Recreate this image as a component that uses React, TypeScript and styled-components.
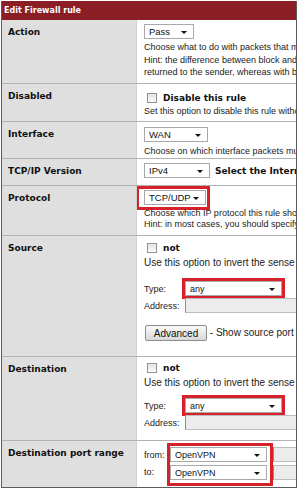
import styled, { createGlobalStyle } from 'styled-components';

const sans = `'Liberation Sans', Arial, sans-serif`;
const heavy = `'DejaVu Sans', Verdana, sans-serif`;

const GlobalStyle = createGlobalStyle`
  html, body {
    margin: 0;
    padding: 0;
    background: #fff;
  }
  * {
    box-sizing: border-box;
  }
`;

const FrameStyled = styled.div`
  margin: 1px 0 0 1px;
  width: 296px;
  border: 1px solid #5c5c5c;
  border-top: none;
  overflow: hidden;
  background: #fff;
`;

const HeaderStyled = styled.div`
  height: 19px;
  margin: 0 -1px;
  padding-left: 3px;
  background: #8b1d24;
  color: #fff;
  font: bold 8px/19px ${heavy};
  white-space: nowrap;
`;

const RowStyled = styled.div<{ $h: number }>`
  display: grid;
  grid-template-columns: 135px 1fr;
  height: ${({ $h }) => $h}px;
  border-bottom: 1px solid #b3b3b3;

  &:last-child {
    border-bottom: none;
  }
`;

const LabelStyled = styled.div`
  padding: 6px 0 0 6px;
  background: #dfdfdf;
  border-right: 1px solid #d2d2d2;
  color: #111;
  font: bold 9px/12px ${heavy};
  white-space: nowrap;
`;

const CellStyled = styled.div<{ $pad: number }>`
  display: flex;
  flex-direction: column;
  align-items: flex-start;
  padding: ${({ $pad }) => $pad}px 0 0 7px;
  overflow: hidden;
  white-space: nowrap;
  color: #222;
  font: 9px ${sans};
`;

const HintStyled = styled.div<{ $gap: number; $lh?: number; $size?: number }>`
  margin-top: ${({ $gap }) => $gap}px;
  font-size: ${({ $size }) => $size ?? 9}px;
  line-height: ${({ $lh }) => $lh ?? 12}px;
  color: #222;
`;

const SelectStyled = styled.div<{ $w: number; $size?: number }>`
  position: relative;
  display: flex;
  align-items: center;
  width: ${({ $w }) => $w}px;
  height: 15px;
  padding-left: 4px;
  flex-shrink: 0;
  border: 1px solid #a9a9a9;
  background: #fff;
  color: #111;
  font: ${({ $size }) => $size ?? 9.5}px ${sans};

  &::after {
    content: '';
    position: absolute;
    right: 6px;
    top: 6px;
    border-left: 3px solid transparent;
    border-right: 3px solid transparent;
    border-top: 3px solid #111;
  }
`;

const InlineStyled = styled.div<{ $gap?: number }>`
  display: flex;
  align-items: center;
  margin-top: ${({ $gap }) => $gap ?? 0}px;
`;

const BoldTextStyled = styled.span<{ $gap?: number }>`
  margin-left: ${({ $gap }) => $gap ?? 6}px;
  color: #111;
  font: bold 9px/12px ${heavy};
`;

const CheckboxStyled = styled.span`
  width: 10px;
  height: 10px;
  margin-left: 3px;
  border: 1px solid #929292;
  background: linear-gradient(#e4e4e4, #fbfbfb);
`;

const Highlight = styled.div<{ $pad: string }>`
  display: flex;
  flex-direction: column;
  gap: 3px;
  padding: ${({ $pad }) => $pad};
  margin: ${({ $pad }) =>
    $pad
      .split(' ')
      .map((v) => (v === '0' ? '0' : `-${v}`))
      .join(' ')};
  outline: 3px solid #d6222b;
`;

const FieldLabelStyled = styled.span<{ $w: number }>`
  width: ${({ $w }) => $w}px;
  flex-shrink: 0;
  font-size: 9px;
  color: #222;
`;

const TextInputStyled = styled.div<{ $w: number }>`
  width: ${({ $w }) => $w}px;
  height: 15px;
  flex-shrink: 0;
  border: 1px solid #bdbdbd;
  border-left-color: #8d8d8d;
  background: #ececec;
`;

const ButtonStyled = styled.div`
  display: flex;
  align-items: center;
  justify-content: center;
  width: 62px;
  height: 16px;
  margin-left: 1px;
  border: 1px solid #8c8c8c;
  border-radius: 2px;
  background: linear-gradient(#fafafa, #d9d9d9);
  color: #111;
  font: 10px ${sans};
`;

const PortGridStyled = styled.div`
  display: flex;
  margin-top: 1px;
`;

const PortLabelsStyled = styled.div`
  display: flex;
  flex-direction: column;
  justify-content: space-around;
  width: 26px;
  height: 33px;
  font-size: 9px;
`;

const PortInputsStyled = styled.div`
  display: flex;
  flex-direction: column;
  gap: 3px;
  margin: 0 0 0 6px;
`;

type FieldProps = { label: string; children: React.ReactNode; h: number };

const Field = ({ label, children, h }: FieldProps) => (
  <RowStyled $h={h}>
    <LabelStyled>{label}</LabelStyled>
    {children}
  </RowStyled>
);

const Endpoint = ({ pad, typeGap, showButton }: { pad: number; typeGap: number; showButton?: boolean }) => (
  <CellStyled $pad={pad}>
    <InlineStyled>
      <CheckboxStyled />
      <BoldTextStyled>not</BoldTextStyled>
    </InlineStyled>
    <HintStyled $gap={3} $size={10}>
      Use this option to invert the sense of the match.
    </HintStyled>
    <InlineStyled $gap={typeGap}>
      <FieldLabelStyled $w={41}>Type:</FieldLabelStyled>
      <Highlight $pad="0">
        <SelectStyled $w={97} $size={9}>any</SelectStyled>
      </Highlight>
    </InlineStyled>
    <InlineStyled $gap={2}>
      <FieldLabelStyled $w={41}>Address:</FieldLabelStyled>
      <TextInputStyled $w={130} />
    </InlineStyled>
    {showButton && (
      <InlineStyled $gap={12}>
        <ButtonStyled>Advanced</ButtonStyled>
        <HintStyled $gap={0} $size={10}>
          &nbsp;- Show source port range
        </HintStyled>
      </InlineStyled>
    )}
  </CellStyled>
);

const App = () => {
  return (
    <>
      <GlobalStyle />
      <FrameStyled>
        <HeaderStyled>Edit Firewall rule</HeaderStyled>

        <Field label="Action" h={64}>
          <CellStyled $pad={4}>
            <SelectStyled $w={50}>Pass</SelectStyled>
            <HintStyled $gap={2} $lh={12.5}>
              Choose what to do with packets that match the criteria specified below.
              <br />
              Hint: the difference between block and reject is that with reject, a packet
              <br />
              returned to the sender, whereas with block the packet is dropped silently.
            </HintStyled>
          </CellStyled>
        </Field>

        <Field label="Disabled" h={38}>
          <CellStyled $pad={8}>
            <InlineStyled>
              <CheckboxStyled />
              <BoldTextStyled>Disable this rule</BoldTextStyled>
            </InlineStyled>
            <HintStyled $gap={1}>Set this option to disable this rule without removing it from the list.</HintStyled>
          </CellStyled>
        </Field>

        <Field label="Interface" h={37}>
          <CellStyled $pad={5}>
            <SelectStyled $w={64}>WAN</SelectStyled>
            <HintStyled $gap={3}>Choose on which interface packets must come in to match this rule.</HintStyled>
          </CellStyled>
        </Field>

        <Field label="TCP/IP Version" h={27}>
          <CellStyled $pad={4}>
            <InlineStyled>
              <SelectStyled $w={66}>IPv4</SelectStyled>
              <BoldTextStyled $gap={5}>Select the Internet Protocol version</BoldTextStyled>
            </InlineStyled>
          </CellStyled>
        </Field>

        <Field label="Protocol" h={50}>
          <CellStyled $pad={4}>
            <Highlight $pad="1px 1px 2px 5px">
              <SelectStyled $w={62}>TCP/UDP</SelectStyled>
            </Highlight>
            <HintStyled $gap={3} $lh={11}>
              Choose which IP protocol this rule should match.
              <br />
              Hint: in most cases, you should specify TCP here.
            </HintStyled>
          </CellStyled>
        </Field>

        <Field label="Source" h={121}>
          <Endpoint pad={6} typeGap={12} showButton />
        </Field>

        <Field label="Destination" h={84}>
          <Endpoint pad={5} typeGap={9} />
        </Field>

        <Field label="Destination port range" h={46}>
          <CellStyled $pad={5}>
            <PortGridStyled>
              <PortLabelsStyled>
                <span>from:</span>
                <span>to:</span>
              </PortLabelsStyled>
              <Highlight $pad="1px 3px 3px 0">
                <SelectStyled $w={97} $size={9}>OpenVPN</SelectStyled>
                <SelectStyled $w={97} $size={9}>OpenVPN</SelectStyled>
              </Highlight>
              <PortInputsStyled>
                <TextInputStyled $w={40} />
                <TextInputStyled $w={40} />
              </PortInputsStyled>
            </PortGridStyled>
          </CellStyled>
        </Field>
      </FrameStyled>
    </>
  );
};

export default App;
